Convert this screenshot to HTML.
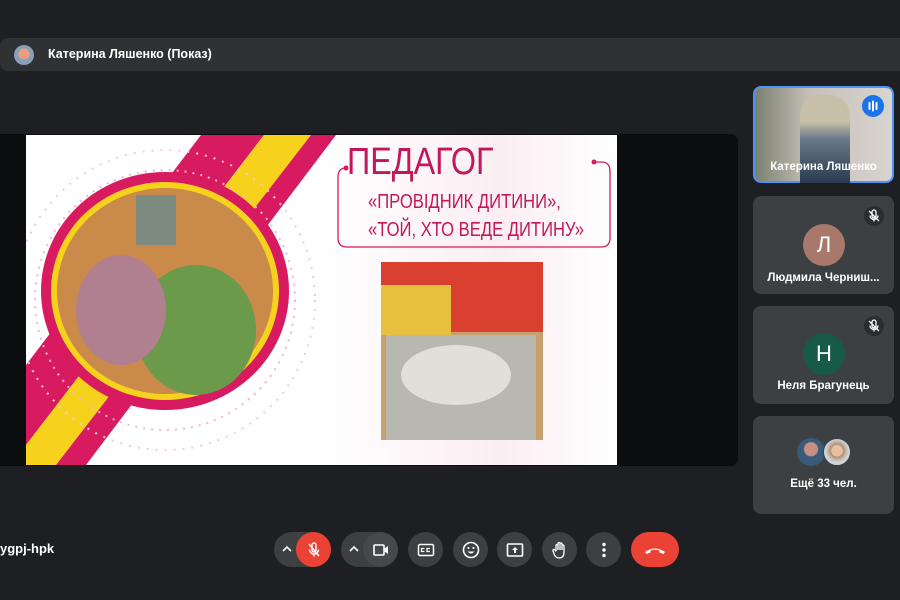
<!DOCTYPE html>
<html><head><meta charset="utf-8"><style>
*{margin:0;padding:0;box-sizing:border-box}
body{width:900px;height:600px;background:#1e1f22;font-family:"Liberation Sans",sans-serif;position:relative;overflow:hidden;color:#e8eaed}
.abs{position:absolute}
.tile{position:absolute;left:753px;width:141px;background:#3c4043;border-radius:8px}
.name{position:absolute;left:0;right:0;text-align:center;font-size:11.5px;font-weight:bold;color:#fff;white-space:nowrap;overflow:hidden;text-overflow:ellipsis;padding:0 10px}
.av{position:absolute;left:50px;width:42px;height:42px;border-radius:50%;color:#fff;font-size:22px;text-align:center;line-height:42px}
.mute{position:absolute;right:10px;top:10px;width:20px;height:20px;border-radius:50%;background:#2b2c2f}
.btn{position:absolute;top:532px;width:35px;height:35px;border-radius:50%;background:#3c4043}
.btn svg{position:absolute;left:8px;top:8px}
</style></head><body>
<div class="abs" style="left:0;top:38px;width:900px;height:33px;background:#303134;border-radius:8px 0 0 8px"></div>
<div class="abs" style="left:14px;top:45px;width:20px;height:20px;border-radius:50%;background:radial-gradient(circle at 50% 45%,#e8a080 0 35%,#8aa0b8 40%)"></div>
<div class="abs" style="left:48px;top:47px;font-size:12.5px;font-weight:bold;color:#fff">Катерина Ляшенко (Показ)</div>

<div class="abs" style="left:0;top:134px;width:738px;height:332px;background:#0c0d0f;border-radius:0 8px 8px 0"></div>
<div class="abs" style="left:26px;top:135px;width:591px;height:330px;background:linear-gradient(90deg,#fff 0,#fff 50%,#fbeef2 80%,#fff 100%);overflow:hidden">
<svg width="591" height="330" style="position:absolute;left:0;top:0">
<polygon points="175,0 238,0 0,310 0,230" fill="#d81b60"/>
<polygon points="238,0 285,0 30,330 0,330 0,310" fill="#f7d21c"/>
<polygon points="285,0 310,0 60,330 30,330" fill="#d81b60"/>
<circle cx="139" cy="165" r="130" fill="none" stroke="#f2b7cb" stroke-width="2" stroke-dasharray="2 6"/>
<circle cx="139" cy="165" r="150" fill="none" stroke="#f5c8d6" stroke-width="2" stroke-dasharray="2 7"/>
<ellipse cx="139" cy="156" rx="124" ry="119" fill="#d81b60"/>
<ellipse cx="139" cy="156" rx="114" ry="109" fill="#f7d21c"/>
<ellipse cx="139" cy="156" rx="108" ry="103" fill="#c98a4a"/>
<ellipse cx="170" cy="195" rx="60" ry="65" fill="#6a9a4a"/>
<ellipse cx="95" cy="175" rx="45" ry="55" fill="#b08090"/>
<rect x="110" y="60" width="40" height="50" fill="#7d8a80"/>
<path d="M320 33 Q312 33 312 42 V103 Q312 112 321 112 H575 Q584 112 584 103 V36 Q584 27 575 27 H568" fill="none" stroke="#d81b60" stroke-width="1.3"/>
<circle cx="320" cy="33" r="2.5" fill="#d81b60"/><circle cx="568" cy="27" r="2.5" fill="#d81b60"/>
<rect x="355" y="127" width="162" height="178" fill="#c8a070"/>
<rect x="355" y="127" width="162" height="70" fill="#d94030"/>
<rect x="355" y="150" width="70" height="50" fill="#e8c040"/>
<rect x="360" y="200" width="150" height="105" fill="#b8b8b0"/>
<ellipse cx="430" cy="240" rx="55" ry="30" fill="#e0e0d8"/>
</svg>
<div class="abs" style="left:321px;top:6px;font-size:38px;color:#c2185b;transform:scaleX(0.85);transform-origin:0 0">ПЕДАГОГ</div>
<div class="abs" style="left:342px;top:53px;font-size:20px;color:#c2185b;line-height:28px;transform:scaleX(0.83);transform-origin:0 0;white-space:nowrap">«ПРОВІДНИК ДИТИНИ»,<br>«ТОЙ, ХТО ВЕДЕ ДИТИНУ»</div>
</div>

<div class="tile" style="top:86px;height:97px;background:linear-gradient(90deg,#7a8070,#c8c0b8 40%,#d8d4d0);border:2px solid #4c94f5"></div>
<div class="abs" style="left:800px;top:95px;width:50px;height:88px;background:linear-gradient(#c8c0a8 0 30%,#6a7a8a 50%,#2a3a50);border-radius:20px 20px 0 0"></div>
<div class="abs" style="left:862px;top:95px;width:22px;height:22px;border-radius:50%;background:#1a73e8"><svg width="22" height="22"><rect x="6.5" y="7" width="2" height="8" rx="1" fill="#fff"/><rect x="10" y="5.5" width="2" height="11" rx="1" fill="#fff"/><rect x="13.5" y="7" width="2" height="8" rx="1" fill="#fff"/></svg></div>
<div class="name" style="left:753px;width:141px;top:161px">Катерина Ляшенко</div>

<div class="tile" style="top:196px;height:98px"><div class="mute"><svg width="20" height="20"><path d="M8 6v4a2 2 0 0 0 4 0V6a2 2 0 0 0-4 0M6 9.5a4 4 0 0 0 8 0M10 13.5v2M5 5l10 10" stroke="#fff" stroke-width="1.3" fill="none"/></svg></div><div class="av" style="top:28px;background:#a8796a">Л</div><div class="name" style="top:76px">Людмила Черниш...</div></div>
<div class="tile" style="top:306px;height:98px"><div class="mute"><svg width="20" height="20"><path d="M8 6v4a2 2 0 0 0 4 0V6a2 2 0 0 0-4 0M6 9.5a4 4 0 0 0 8 0M10 13.5v2M5 5l10 10" stroke="#fff" stroke-width="1.3" fill="none"/></svg></div><div class="av" style="top:27px;background:#175a46">Н</div><div class="name" style="top:74px">Неля Брагунець</div></div>
<div class="tile" style="top:416px;height:98px">
<div class="abs" style="left:44px;top:22px;width:28px;height:28px;border-radius:50%;background:radial-gradient(circle at 50% 40%,#c89080 0 30%,#3a5a7a 35%)"></div>
<div class="abs" style="left:70px;top:22px;width:28px;height:28px;border-radius:50%;background:radial-gradient(circle at 50% 45%,#e8c0a0 0 28%,#b09070 32%,#d0d4d8 60%);border:1px solid #3c4043"></div>
<div class="name" style="top:62px">Ещё 33 чел.</div></div>

<div class="abs" style="left:0;top:541px;font-size:13px;font-weight:bold;color:#fff">ygpj-hpk</div>

<div class="btn" style="left:274px;width:56px;border-radius:18px"></div>
<svg class="abs" style="left:281px;top:544px" width="12" height="10"><path d="M2 7l4-4 4 4" stroke="#fff" stroke-width="1.6" fill="none"/></svg>
<div class="btn" style="left:296px;background:#ea4335"><svg width="20" height="20"><path d="M8 5v5a2 2 0 0 0 4 0V5a2 2 0 0 0-4 0M5.5 9.5a4.5 4.5 0 0 0 9 0M10 14v2.5M5 4l10 12" stroke="#fff" stroke-width="1.4" fill="none"/></svg></div>
<div class="btn" style="left:341px;width:56px;border-radius:18px"></div>
<svg class="abs" style="left:348px;top:544px" width="12" height="10"><path d="M2 7l4-4 4 4" stroke="#fff" stroke-width="1.6" fill="none"/></svg>
<div class="btn" style="left:363px;background:#45484c"><svg width="20" height="20"><rect x="3" y="5" width="10" height="10" rx="1" stroke="#fff" stroke-width="1.6" fill="none"/><path d="M13 9l4-3v8l-4-3z" fill="#fff"/></svg></div>
<div class="btn" style="left:408px"><svg width="20" height="20"><rect x="2.5" y="4.5" width="15" height="11" rx="1.5" stroke="#fff" stroke-width="1.5" fill="none"/><path d="M8.5 8.5h-3v3h3M14 8.5h-3v3h3" stroke="#fff" stroke-width="1.3" fill="none"/></svg></div>
<div class="btn" style="left:453px"><svg width="20" height="20"><circle cx="10" cy="10" r="7.5" stroke="#fff" stroke-width="1.6" fill="none"/><circle cx="7.5" cy="8" r="1.1" fill="#fff"/><circle cx="12.5" cy="8" r="1.1" fill="#fff"/><path d="M6.5 11.5q3.5 4 7 0z" fill="#fff"/></svg></div>
<div class="btn" style="left:497px"><svg width="20" height="20"><rect x="2.5" y="4" width="15" height="12" rx="1" stroke="#fff" stroke-width="1.6" fill="none"/><path d="M10 7l-3 3h2v3h2v-3h2z" fill="#fff"/></svg></div>
<div class="btn" style="left:542px"><svg width="20" height="20"><path d="M6 11V5.5a1 1 0 0 1 2 0V10M8 10V3.5a1 1 0 0 1 2 0V10M10 10V4a1 1 0 0 1 2 0v6M12 10V6a1 1 0 0 1 2 0v6q0 6-5 6-3 0-4.5-3L3 11a1 1 0 0 1 2-1l1 1.5" stroke="#fff" stroke-width="1.3" fill="none"/></svg></div>
<div class="btn" style="left:586px"><svg width="20" height="20"><circle cx="10" cy="4.5" r="1.7" fill="#fff"/><circle cx="10" cy="10" r="1.7" fill="#fff"/><circle cx="10" cy="15.5" r="1.7" fill="#fff"/></svg></div>
<div class="btn" style="left:631px;width:48px;border-radius:18px;background:#ea4335"><svg width="32" height="20" style="left:8px"><path d="M6 12q10-7 20 0l-1.5 2-4-1.5v-2q-4.5-1.5-9 0v2l-4 1.5z" fill="#fff"/></svg></div>
</body></html>
